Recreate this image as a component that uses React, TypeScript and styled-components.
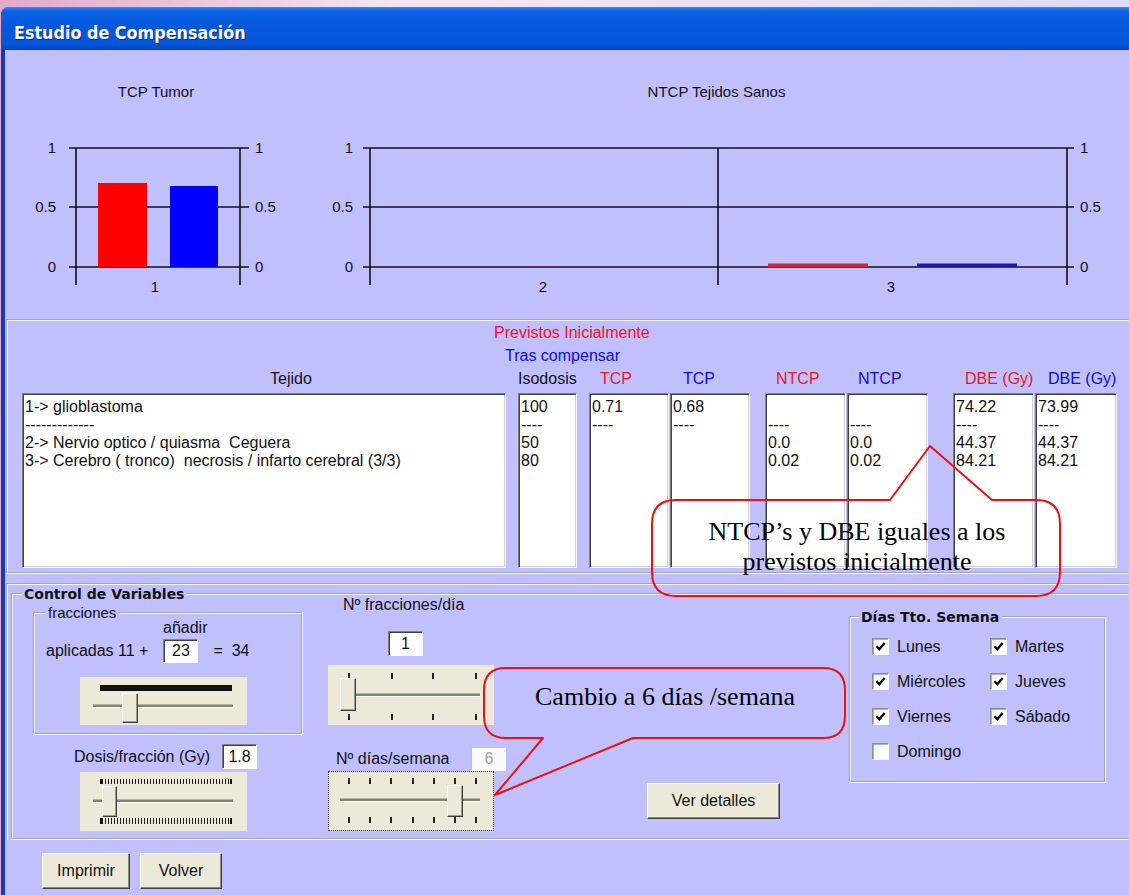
import styled, { createGlobalStyle, css } from 'styled-components'

const FORM = '#c0c0ff'
const FACE = '#ece9d8'
const RED = '#f0141e'
const BLUE = '#0c0cdc'

const GlobalStyle = createGlobalStyle`
  html, body {
    margin: 0;
    padding: 0;
  }
  body {
    width: 1129px;
    height: 895px;
    overflow: hidden;
    background: linear-gradient(90deg, #e4aac8 0%, #f4e6ef 35%, #dedcf4 100%);
    font-family: "Liberation Sans", Arial, sans-serif;
    font-size: 16px;
    color: #111;
  }
`

/* ---------- window chrome ---------- */

const Screen = styled.div`
  position: relative;
  width: 1129px;
  height: 895px;
  overflow: hidden;
`

const Window = styled.div`
  margin: 7px 0 0 1px;
  width: 1140px;
  height: 890px;
  border-top-left-radius: 8px;
  overflow: hidden;
  background: linear-gradient(90deg, #0b3cc8, #1150e0);
  display: flex;
  flex-direction: column;
`

const TitleBar = styled.div`
  height: 43px;
  box-sizing: border-box;
  flex-shrink: 0;
  display: flex;
  align-items: center;
  padding: 7px 0 0 13px;
  background: linear-gradient(180deg, #3d8af7 0%, #0b62e6 10%, #0558dc 45%, #0556da 85%, #0644c4 100%);
`

const Title = styled.span`
  font-family: "DejaVu Sans", Verdana, sans-serif;
  font-weight: bold;
  font-size: 16px;
  color: #fff;
  text-shadow: 1px 1px 0 #0a2c8c;
  transform: scaleY(1.12);
`

const Client = styled.div`
  flex: 1;
  margin-left: 4px;
  background: ${FORM};
  display: flex;
  flex-direction: column;
`

/* ---------- charts ---------- */

const ChartRow = styled.div`
  display: flex;
  height: 269px;
  flex-shrink: 0;
`

const ChartBlock = styled.div<{ $w: number }>`
  width: ${p => p.$w}px;
  flex-shrink: 0;
  display: flex;
  flex-direction: column;
`

const ChartTitle = styled.div<{ $shift: number }>`
  padding: 33px 0 0 ${p => p.$shift}px;
  height: 18px;
  line-height: 18px;
  font-size: 15px;
  text-align: center;
`

const LEVELS: [number, string][] = [
  [148, '1'],
  [207, '0.5'],
  [267, '0'],
]

interface ChartBar {
  x: number
  w: number
  top: number
  fill: string
}

interface ChartSpec {
  view: [number, number, number, number]
  frames: number[]
  tickFrom: number
  tickTo: number
  leftLabelEnd: number
  rightLabelStart: number
  categories: [number, string][]
  bars: ChartBar[]
}

const tcpChart: ChartSpec = {
  view: [5, 101, 296, 199],
  frames: [76, 240],
  tickFrom: 69,
  tickTo: 249,
  leftLabelEnd: 56,
  rightLabelStart: 255,
  categories: [[155, '1']],
  bars: [
    { x: 98, w: 49, top: 183, fill: '#ff0000' },
    { x: 170, w: 48, top: 186, fill: '#0000ff' },
  ],
}

const ntcpChart: ChartSpec = {
  view: [301, 101, 829, 199],
  frames: [370, 718, 1067],
  tickFrom: 363,
  tickTo: 1074,
  leftLabelEnd: 353,
  rightLabelStart: 1080,
  categories: [
    [543, '2'],
    [891, '3'],
  ],
  bars: [
    { x: 768, w: 100, top: 263.5, fill: '#c8283a' },
    { x: 917, w: 100, top: 263.5, fill: '#1a1aa6' },
  ],
}

const Chart = ({ spec }: { spec: ChartSpec }) => {
  const [vx, vy, vw, vh] = spec.view
  return (
    <svg width={vw} height={vh} viewBox={`${vx} ${vy} ${vw} ${vh}`}>
      <g stroke="#111" strokeWidth={1.6}>
        {LEVELS.map(([y]) => (
          <line key={y} x1={spec.tickFrom} x2={spec.tickTo} y1={y} y2={y} />
        ))}
        {spec.frames.map(x => (
          <line key={x} x1={x} x2={x} y1={148} y2={285} />
        ))}
      </g>
      {spec.bars.map(b => (
        <rect key={b.x} x={b.x} y={b.top} width={b.w} height={267 - b.top} fill={b.fill} />
      ))}
      <g fontFamily="Liberation Sans, Arial, sans-serif" fontSize={15} fill="#111">
        {LEVELS.map(([y, t]) => (
          <text key={`l${y}`} x={spec.leftLabelEnd} y={y + 5} textAnchor="end">
            {t}
          </text>
        ))}
        {LEVELS.map(([y, t]) => (
          <text key={`r${y}`} x={spec.rightLabelStart} y={y + 5}>
            {t}
          </text>
        ))}
        {spec.categories.map(([x, t]) => (
          <text key={t} x={x} y={292} textAnchor="middle">
            {t}
          </text>
        ))}
      </g>
    </svg>
  )
}

/* ---------- results table ---------- */

const TablePanel = styled.div`
  margin-left: 1px;
  border: 2px groove #f4f4ff;
  border-right: none;
  padding: 0 0 4px 14px;
  flex-shrink: 0;
`

const Caption = styled.div<{ $color: string; $pl: number }>`
  height: 23px;
  line-height: 23px;
  padding-left: ${p => p.$pl}px;
  color: ${p => p.$color};
`

const Columns = styled.div`
  display: flex;
`

const Column = styled.div<{ $w: number; $ml: number }>`
  width: ${p => p.$w}px;
  margin-left: ${p => p.$ml}px;
  flex-shrink: 0;
`

const Heading = styled.div<{ $color: string; $pl: number }>`
  height: 23px;
  line-height: 23px;
  margin-bottom: 3px;
  padding-left: ${p => p.$pl}px;
  color: ${p => p.$color};
  white-space: nowrap;
`

const ListBox = styled.div`
  height: 175px;
  box-sizing: border-box;
  background: #fff;
  border: 1px solid;
  border-color: #808080 #f6f6f6 #f6f6f6 #808080;
  box-shadow: inset 1px 1px 0 #404040, inset -1px -1px 0 #d4d0c8;
  padding: 4px 2px 0 2px;
  line-height: 18px;
  white-space: pre;
  overflow: hidden;
`

interface TableColumn {
  head: string
  color: string
  w: number
  ml: number
  pl: number
  rows: string[]
}

const tableColumns: TableColumn[] = [
  {
    head: 'Tejido',
    color: '#111',
    w: 484,
    ml: 0,
    pl: 248,
    rows: [
      '1-> glioblastoma',
      '-------------',
      '2-> Nervio optico / quiasma  Ceguera',
      '3-> Cerebro ( tronco)  necrosis / infarto cerebral (3/3)',
    ],
  },
  { head: 'Isodosis', color: '#111', w: 59, ml: 12, pl: 0, rows: ['100', '----', '50', '80'] },
  { head: 'TCP', color: RED, w: 80, ml: 12, pl: 11, rows: ['0.71', '----'] },
  { head: 'TCP', color: BLUE, w: 80, ml: 1, pl: 13, rows: ['0.68', '----'] },
  { head: 'NTCP', color: RED, w: 81, ml: 15, pl: 11, rows: ['', '----', '0.0', '0.02'] },
  { head: 'NTCP', color: BLUE, w: 81, ml: 1, pl: 11, rows: ['', '----', '0.0', '0.02'] },
  { head: 'DBE (Gy)', color: RED, w: 81, ml: 25, pl: 12, rows: ['74.22', '----', '44.37', '84.21'] },
  { head: 'DBE (Gy)', color: BLUE, w: 82, ml: 1, pl: 13, rows: ['73.99', '----', '44.37', '84.21'] },
]

/* ---------- controls ---------- */

const ControlFrame = styled.div`
  margin: 9px 0 0 1px;
  border-top: 2px groove #f4f4ff;
  border-left: 2px groove #f4f4ff;
  flex-shrink: 0;
`

const GroupBox = styled.fieldset<{ $w?: number }>`
  margin: 0;
  min-width: 0;
  box-sizing: border-box;
  ${p => p.$w && `width: ${p.$w}px;`}
  border: 2px groove #f4f4ff;
  flex-shrink: 0;
`

const VariablesBox = styled(GroupBox)`
  margin: 1px 0 0 3px;
  padding: 0 0 7px 9px;
`

const GroupTitle = styled.legend<{ $bold?: boolean }>`
  padding: 0 2px;
  line-height: 16px;
  ${p =>
    p.$bold
      ? css`
          font-family: "DejaVu Sans", Verdana, sans-serif;
          font-weight: bold;
          font-size: 14px;
        `
      : css`
          font-size: 15px;
        `}
`

const ControlRow = styled.div`
  display: flex;
  align-items: flex-start;
  padding-left: 11px;
`

const Stack = styled.div<{ $w?: number; $ml?: number; $mt?: number }>`
  display: flex;
  flex-direction: column;
  align-items: flex-start;
  flex-shrink: 0;
  ${p => p.$w && `width: ${p.$w}px;`}
  margin-left: ${p => p.$ml ?? 0}px;
  margin-top: ${p => p.$mt ?? 0}px;
`

const FractionsBox = styled(GroupBox)`
  margin-top: 3px;
  padding: 0 0 8px 11px;
`

const SmallLabel = styled.div<{ $pl: number; $mt?: number; $lh?: number }>`
  padding-left: ${p => p.$pl}px;
  margin-top: ${p => p.$mt ?? 0}px;
  line-height: ${p => p.$lh ?? 16}px;
  white-space: pre;
`

const FieldRow = styled.div<{ $mt: number; $pl?: number; $h?: number }>`
  display: flex;
  align-items: center;
  height: ${p => p.$h ?? 24}px;
  margin-top: ${p => p.$mt}px;
  padding-left: ${p => p.$pl ?? 0}px;
  white-space: pre;
`

const TextBox = styled.div<{ $ml?: number; $mt?: number; $h?: number; $disabled?: boolean }>`
  width: 35px;
  height: ${p => p.$h ?? 24}px;
  margin-left: ${p => p.$ml ?? 0}px;
  margin-top: ${p => p.$mt ?? 0}px;
  box-sizing: border-box;
  flex-shrink: 0;
  display: flex;
  align-items: center;
  justify-content: center;
  background: #fff;
  border: 1px solid;
  ${p =>
    p.$disabled
      ? css`
          border-color: #c4c4c4 #fafafa #fafafa #c4c4c4;
          color: #a6a6a6;
          background: #fafaf8;
        `
      : css`
          border-color: #808080 #fff #fff #808080;
          box-shadow: inset 1px 1px 0 #404040;
          color: #111;
        `}
`

const Gap = styled.span<{ $w: number }>`
  display: inline-block;
  width: ${p => p.$w}px;
`

/* trackbar */

const Trackbar = styled.div<{ $w: number; $h: number; $ml?: number; $mt?: number; $focus?: boolean }>`
  position: relative;
  flex-shrink: 0;
  width: ${p => p.$w}px;
  height: ${p => p.$h}px;
  margin-left: ${p => p.$ml ?? 0}px;
  margin-top: ${p => p.$mt ?? 0}px;
  background: ${FACE};
  ${p =>
    p.$focus &&
    css`
      outline: 1px dotted #333;
      outline-offset: -1px;
    `}
`

const Groove = styled.div<{ $y: number; $x0: number; $x1: number }>`
  position: absolute;
  left: ${p => p.$x0}px;
  width: ${p => p.$x1 - p.$x0}px;
  top: ${p => p.$y - 1}px;
  height: 2px;
  background: #85826f;
  box-shadow: 0 1px 0 #fff, 0 -1px 0 #b8b4a4;
`

const Thumb = styled.div<{ $x: number; $y: number; $w: number; $h: number }>`
  position: absolute;
  left: ${p => p.$x}px;
  top: ${p => p.$y}px;
  width: ${p => p.$w}px;
  height: ${p => p.$h}px;
  box-sizing: border-box;
  background: ${FACE};
  border: 1px solid;
  border-color: #fff #404040 #404040 #fff;
  box-shadow: inset -1px -1px 0 #a09c8c;
`

const Tick = styled.div<{ $x: number; $y: number; $h: number }>`
  position: absolute;
  left: ${p => p.$x}px;
  top: ${p => p.$y}px;
  width: 2px;
  height: ${p => p.$h}px;
  background: #222;
`

const TickStrip = styled.div<{ $x0: number; $x1: number; $y: number; $h: number; $pitch: number }>`
  position: absolute;
  left: ${p => p.$x0}px;
  width: ${p => p.$x1 - p.$x0}px;
  top: ${p => p.$y}px;
  height: ${p => p.$h}px;
  background: ${p =>
    p.$pitch ? `repeating-linear-gradient(90deg, #1a1a1a 0 1.4px, transparent 1.4px ${p.$pitch}px)` : '#111'};
  border-left: 2px solid #111;
  border-right: 2px solid #111;
`

interface Strip {
  x0: number
  x1: number
  y: number
  h: number
  pitch: number
}

interface SliderProps {
  w: number
  h: number
  ml?: number
  mt?: number
  groove: [number, number, number]
  thumb: [number, number, number, number]
  ticks?: { xs: number[]; ys: number[]; h: number }
  strips?: Strip[]
  focus?: boolean
}

const Slider = ({ w, h, ml, mt, groove, thumb, ticks, strips, focus }: SliderProps) => (
  <Trackbar $w={w} $h={h} $ml={ml} $mt={mt} $focus={focus}>
    {strips?.map(s => (
      <TickStrip key={s.y} $x0={s.x0} $x1={s.x1} $y={s.y} $h={s.h} $pitch={s.pitch} />
    ))}
    {ticks?.ys.map(y => ticks.xs.map(x => <Tick key={`${x}-${y}`} $x={x} $y={y} $h={ticks.h} />))}
    <Groove $y={groove[0]} $x0={groove[1]} $x1={groove[2]} />
    <Thumb $x={thumb[0]} $y={thumb[1]} $w={thumb[2]} $h={thumb[3]} />
  </Trackbar>
)

const sevenTicks = [20, 41, 62, 84, 105, 126, 147]

/* buttons */

const Button = styled.button<{ $w: number; $ml?: number; $mt?: number }>`
  width: ${p => p.$w}px;
  height: 36px;
  margin-left: ${p => p.$ml ?? 0}px;
  margin-top: ${p => p.$mt ?? 0}px;
  flex-shrink: 0;
  padding: 0;
  background: ${FACE};
  border: 1px solid;
  border-color: #fff #404040 #404040 #fff;
  box-shadow: inset -1px -1px 0 #8c8a7c;
  font-family: "Liberation Sans", Arial, sans-serif;
  font-size: 16px;
  color: #111;
`

/* week days */

const DaysBox = styled(GroupBox)`
  margin: 7px 0 0 69px;
  padding: 0 0 12px 8px;
`

const DaysGrid = styled.div`
  display: grid;
  grid-template-columns: 118px 118px;
  grid-auto-rows: 35px;
  padding: 4px 0 0 13px;
`

const CheckItem = styled.div`
  display: flex;
  align-items: center;
  gap: 8px;
`

const CheckBox = styled.span`
  width: 17px;
  height: 17px;
  box-sizing: border-box;
  display: flex;
  align-items: center;
  justify-content: center;
  background: linear-gradient(135deg, #e8e8e8, #fff 60%);
  border: 1px solid;
  border-color: #8a8a8a #fafafa #fafafa #8a8a8a;
  box-shadow: inset 1px 1px 0 #b4b4b4;
`

const days: [string, boolean][] = [
  ['Lunes', true],
  ['Martes', true],
  ['Miércoles', true],
  ['Jueves', true],
  ['Viernes', true],
  ['Sábado', true],
  ['Domingo', false],
]

const Footer = styled.div`
  display: flex;
  gap: 10px;
  margin-top: 13px;
  padding-left: 37px;
`

/* callouts */

const CalloutBox = styled.div<{ $x: number; $y: number; $w: number; $h: number }>`
  position: absolute;
  left: ${p => p.$x}px;
  top: ${p => p.$y}px;
  width: ${p => p.$w}px;
  height: ${p => p.$h}px;
  pointer-events: none;
`

const CalloutText = styled.div<{ $top: number }>`
  position: absolute;
  left: 0;
  right: 0;
  top: ${p => p.$top}px;
  text-align: center;
  font-family: "Liberation Serif", "Times New Roman", serif;
  font-size: 26px;
  line-height: 30px;
  color: #000;
`

interface CalloutProps {
  x: number
  y: number
  w: number
  h: number
  path: string
  textTop: number
  lines: string[]
}

const Callout = ({ x, y, w, h, path, textTop, lines }: CalloutProps) => (
  <CalloutBox $x={x} $y={y} $w={w} $h={h}>
    <svg width={w} height={h} style={{ position: 'absolute', left: 0, top: 0 }}>
      <path d={path} fill="none" stroke="#f01010" strokeWidth={2} strokeLinejoin="round" />
    </svg>
    <CalloutText $top={textTop}>
      {lines.map(l => (
        <div key={l}>{l}</div>
      ))}
    </CalloutText>
  </CalloutBox>
)

export default function App() {
  return (
    <Screen>
      <GlobalStyle />
      <Window>
        <TitleBar>
          <Title>Estudio de Compensación</Title>
        </TitleBar>
        <Client>
          <ChartRow>
            <ChartBlock $w={296}>
              <ChartTitle $shift={6}>TCP Tumor</ChartTitle>
              <Chart spec={tcpChart} />
            </ChartBlock>
            <ChartBlock $w={829}>
              <ChartTitle $shift={2}>NTCP Tejidos Sanos</ChartTitle>
              <Chart spec={ntcpChart} />
            </ChartBlock>
          </ChartRow>

          <TablePanel>
            <Caption $color={RED} $pl={472}>
              Previstos Inicialmente
            </Caption>
            <Caption $color={BLUE} $pl={483}>
              Tras compensar
            </Caption>
            <Columns>
              {tableColumns.map((c, i) => (
                <Column key={i} $w={c.w} $ml={c.ml}>
                  <Heading $color={c.color} $pl={c.pl}>
                    {c.head}
                  </Heading>
                  <ListBox>
                    {c.rows.map((r, j) => (
                      <div key={j}>{r || ' '}</div>
                    ))}
                  </ListBox>
                </Column>
              ))}
            </Columns>
          </TablePanel>

          <ControlFrame>
            <VariablesBox>
              <GroupTitle $bold>Control de Variables</GroupTitle>
              <ControlRow>
                <Stack $w={270}>
                  <FractionsBox $w={270}>
                    <GroupTitle>fracciones</GroupTitle>
                    <SmallLabel $pl={117} $lh={14}>
                      añadir
                    </SmallLabel>
                    <FieldRow $mt={4}>
                      aplicadas 11 +
                      <TextBox $ml={15}>23</TextBox>
                      <Gap $w={15} />=  34
                    </FieldRow>
                    <Slider
                      w={167}
                      h={48}
                      ml={34}
                      mt={14}
                      strips={[{ x0: 20, x1: 148, y: 8, h: 6, pitch: 0 }]}
                      groove={[29, 13, 153]}
                      thumb={[42, 16, 16, 30]}
                    />
                  </FractionsBox>
                  <FieldRow $mt={9} $pl={41} $h={25}>
                    Dosis/fracción (Gy)
                    <TextBox $ml={12} $h={25}>
                      1.8
                    </TextBox>
                  </FieldRow>
                  <Slider
                    w={167}
                    h={59}
                    ml={47}
                    mt={3}
                    strips={[
                      { x0: 20, x1: 148, y: 7, h: 5, pitch: 3 },
                      { x0: 20, x1: 148, y: 46, h: 6, pitch: 3 },
                    ]}
                    groove={[29, 13, 153]}
                    thumb={[22, 14, 15, 31]}
                  />
                </Stack>

                <Stack $w={178} $ml={25}>
                  <SmallLabel $pl={15} $mt={-5}>
                    Nº fracciones/día
                  </SmallLabel>
                  <TextBox $ml={60} $mt={18} $h={25}>
                    1
                  </TextBox>
                  <Slider
                    w={166}
                    h={60}
                    mt={9}
                    ticks={{ xs: [20, 63, 104, 147], ys: [8, 49], h: 6 }}
                    groove={[30, 12, 152]}
                    thumb={[12, 13, 16, 33]}
                  />
                  <FieldRow $mt={22} $pl={8}>
                    Nº días/semana
                    <TextBox $ml={22} $disabled>
                      6
                    </TextBox>
                  </FieldRow>
                  <Slider
                    w={166}
                    h={60}
                    focus
                    ticks={{ xs: sevenTicks, ys: [7, 46], h: 6 }}
                    groove={[29, 12, 152]}
                    thumb={[119, 14, 16, 32]}
                  />
                </Stack>

                <Button $w={133} $ml={141} $mt={181}>
                  Ver detalles
                </Button>

                <DaysBox $w={257}>
                  <GroupTitle $bold>Días Tto. Semana</GroupTitle>
                  <DaysGrid>
                    {days.map(([d, on]) => (
                      <CheckItem key={d}>
                        <CheckBox>
                          {on && (
                            <svg width="11" height="11" viewBox="0 0 11 11">
                              <path d="M1.5 5.2 L4.3 8.2 L9.6 2" fill="none" stroke="#000" strokeWidth={2.4} />
                            </svg>
                          )}
                        </CheckBox>
                        {d}
                      </CheckItem>
                    ))}
                  </DaysGrid>
                </DaysBox>
              </ControlRow>
            </VariablesBox>
          </ControlFrame>

          <Footer>
            <Button $w={88}>Imprimir</Button>
            <Button $w={82}>Volver</Button>
          </Footer>
        </Client>
      </Window>

      <Callout
        x={650}
        y={444}
        w={414}
        h={156}
        path="M26 56 L240 56 L280 2 L342 56 L386 56 Q410 56 410 80 L410 128 Q410 152 386 152 L26 152 Q2 152 2 128 L2 80 Q2 56 26 56 Z"
        textTop={73}
        lines={['NTCP’s y DBE iguales a los', 'previstos inicialmente']}
      />
      <Callout
        x={480}
        y={664}
        w={370}
        h={134}
        path="M26 4 L343 4 Q365 4 365 26 L365 52 Q365 74 343 74 L153 74 L15 131 L63 74 L26 74 Q4 74 4 52 L4 26 Q4 4 26 4 Z"
        textTop={18}
        lines={['Cambio a 6 días /semana']}
      />
    </Screen>
  )
}
